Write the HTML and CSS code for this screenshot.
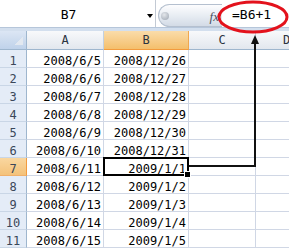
FILE: index.html
```html
<!DOCTYPE html>
<html lang="ja">
<head>
    <meta charset="UTF-8">
    <title>日付の連続入力</title>
    <link rel="stylesheet" href="styles.css">
</head>
<body>
    <div class="window">
        <!-- 数式バー -->
        <div class="formula-bar">
            <div class="name-box">
                <span class="name">B7</span>
                <span class="drop"></span>
            </div>
            <div class="splitter">
                <span class="grip"></span>
                <span class="fx">fx</span>
            </div>
            <div class="formula">=B6+1</div>
        </div>

        <!-- シート -->
        <div class="sheet">
            <div class="corner"></div>
            <div class="col-head">A</div>
            <div class="col-head selected">B</div>
            <div class="col-head">C</div>
            <div class="col-head">D</div>

            <div class="row-head">1</div><div class="cell">2008/6/5</div><div class="cell">2008/12/26</div><div class="cell"></div><div class="cell"></div>
            <div class="row-head">2</div><div class="cell">2008/6/6</div><div class="cell">2008/12/27</div><div class="cell"></div><div class="cell"></div>
            <div class="row-head">3</div><div class="cell">2008/6/7</div><div class="cell">2008/12/28</div><div class="cell"></div><div class="cell"></div>
            <div class="row-head">4</div><div class="cell">2008/6/8</div><div class="cell">2008/12/29</div><div class="cell"></div><div class="cell"></div>
            <div class="row-head">5</div><div class="cell">2008/6/9</div><div class="cell">2008/12/30</div><div class="cell"></div><div class="cell"></div>
            <div class="row-head">6</div><div class="cell">2008/6/10</div><div class="cell">2008/12/31</div><div class="cell"></div><div class="cell"></div>
            <div class="row-head selected">7</div><div class="cell">2008/6/11</div><div class="cell active">2009/1/1</div><div class="cell"></div><div class="cell"></div>
            <div class="row-head">8</div><div class="cell">2008/6/12</div><div class="cell">2009/1/2</div><div class="cell"></div><div class="cell"></div>
            <div class="row-head">9</div><div class="cell">2008/6/13</div><div class="cell">2009/1/3</div><div class="cell"></div><div class="cell"></div>
            <div class="row-head">10</div><div class="cell">2008/6/14</div><div class="cell">2009/1/4</div><div class="cell"></div><div class="cell"></div>
            <div class="row-head">11</div><div class="cell">2008/6/15</div><div class="cell">2009/1/5</div><div class="cell"></div><div class="cell"></div>
        </div>

        <!-- 注釈 (赤丸と矢印) -->
        <svg class="callout" width="289" height="249" viewBox="0 0 289 249">
            <ellipse cx="253" cy="17" rx="34" ry="15" fill="none" stroke="#e3121c" stroke-width="3"/>
            <path d="M189 166 H255 V42" fill="none" stroke="#111" stroke-width="2"/>
            <path d="M255 35 L259 44 L251 44 Z" fill="#111"/>
        </svg>
    </div>
</body>
</html>
```

FILE: styles.css
```css
* {
    margin: 0;
    padding: 0;
    box-sizing: border-box;
}

body {
    background: #fff;
    font-family: 'DejaVu Sans Mono', 'Liberation Mono', monospace;
    color: #000;
}

.window {
    position: relative;
    width: 289px;
    height: 249px;
    overflow: hidden;
}

/* 数式バー */
.formula-bar {
    display: flex;
    height: 28px;
    background: #fff;
    border-bottom: 1px solid #b6c6da;
}

.name-box {
    width: 156px;
    display: flex;
    align-items: center;
    border-right: 1px solid #c3cad4;
}

.name {
    width: 137px;
    text-align: center;
    font-size: 13px;
    padding-top: 2px;
}

.drop {
    margin-left: 10px;
    width: 0;
    height: 0;
    border-left: 3px solid transparent;
    border-right: 3px solid transparent;
    border-top: 4px solid #000;
    margin-top: 4px;
}

.splitter {
    width: 64px;
    height: 23px;
    margin: 4px 0 0 2px;
    display: flex;
    align-items: center;
    justify-content: space-between;
    padding: 0 3px 0 2px;
    border: 1px solid #b5c0cf;
    border-right: none;
    border-radius: 12px 0 0 12px;
    background: linear-gradient(#fdfdfe 0%, #e8edf3 50%, #d3dbe6 100%);
}

.grip {
    width: 8px;
    height: 8px;
    border-radius: 50%;
    background: radial-gradient(circle at 40% 35%, #e4e7eb, #9ba4b0);
}

.fx {
    font-family: 'Liberation Serif', serif;
    font-style: italic;
    font-size: 13px;
    color: #4b5360;
    padding-top: 2px;
}

.formula {
    flex: 1;
    display: flex;
    align-items: center;
    padding: 2px 0 0 10px;
    font-size: 13px;
}

/* シート */
.sheet {
    display: grid;
    grid-template-columns: 27px 77px 85px 67px 62px;
    grid-template-rows: 19px;
    grid-auto-rows: 18px;
    border-top: 3px solid #d3dfee;
    width: 318px;
}

.corner {
    border-right: 1px solid #9eb6ce;
    border-bottom: 1px solid #9eb6ce;
    background:
        linear-gradient(135deg, transparent 50%, #e2e8f0 50%) no-repeat right 3px bottom 4px / 9px 9px,
        linear-gradient(#dce6f4, #bfd2ea);
}

.col-head {
    text-align: center;
    font-size: 12px;
    line-height: 18px;
    color: #2b3340;
    border-right: 1px solid #c2d0e1;
    border-bottom: 1px solid #9eb6ce;
    background: linear-gradient(#f8f9fb, #e2e7ee);
}

.col-head.selected {
    background: linear-gradient(#fadcaa, #f4bf6c);
    border-right-color: #f0a850;
    border-bottom-color: #f29b3e;
}

.row-head {
    text-align: center;
    font-size: 12px;
    line-height: 11px;
    padding-top: 6px;
    color: #3a4759;
    background: #e4ecf7;
    border-right: 1px solid #9eb6ce;
    border-bottom: 1px solid #c9d6e6;
}

.row-head.selected {
    background: linear-gradient(#f9d7a0, #f4c27a);
    border-right-color: #f29b3e;
    border-bottom-color: #f0b06a;
}

.cell {
    text-align: right;
    white-space: nowrap;
    font-size: 12px;
    line-height: 11px;
    padding: 6px 2px 0 0;
    border-right: 1px solid #d0d7e5;
    border-bottom: 1px solid #d0d7e5;
}

/* アクティブセル */
.cell.active {
    position: relative;
}

.cell.active::before {
    content: '';
    position: absolute;
    inset: -1px;
    border: 2px solid #000;
}

.cell.active::after {
    content: '';
    position: absolute;
    right: -2px;
    bottom: -2px;
    width: 5px;
    height: 5px;
    background: #000;
    box-shadow: 0 0 0 1px #fff;
}

.callout {
    position: absolute;
    top: 0;
    left: 0;
    pointer-events: none;
}
```
